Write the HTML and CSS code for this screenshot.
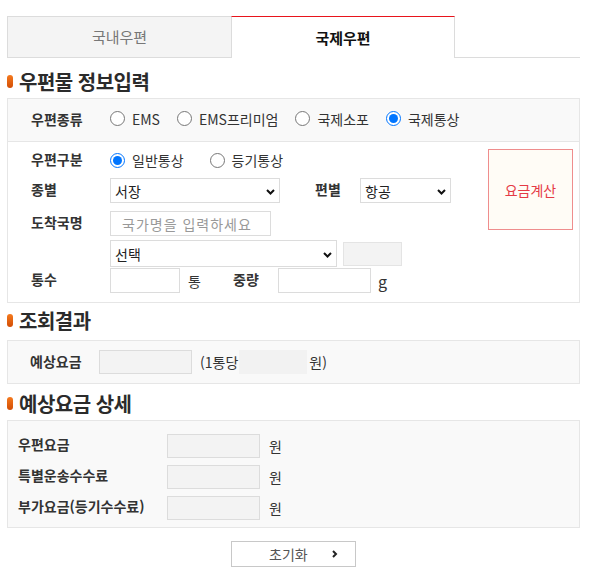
FILE: index.html
```html
<!DOCTYPE html>
<html lang="ko">
<head>
  <meta charset="UTF-8" />
  <title>국제우편 요금계산</title>
  <link rel="stylesheet" href="styles.css">
</head>
<body>
<div class="wrap">

  <div class="tabs">
    <div class="tab">국내우편</div>
    <div class="tab on">국제우편</div>
    <div class="tab-rest"></div>
  </div>

  <h3 class="title"><span class="dot"></span>우편물 정보입력</h3>

  <div class="box gray type-row">
    <span class="lbl">우편종류</span>
    <label class="opt"><input type="radio" name="kind">EMS</label>
    <label class="opt"><input type="radio" name="kind">EMS프리미엄</label>
    <label class="opt"><input type="radio" name="kind">국제소포</label>
    <label class="opt"><input type="radio" name="kind" checked>국제통상</label>
  </div>

  <div class="box info">
    <div class="form">
      <div class="row r1">
        <span class="lbl">우편구분</span>
        <label class="opt wide"><input type="radio" name="sub" checked>일반통상</label>
        <label class="opt"><input type="radio" name="sub">등기통상</label>
      </div>
      <div class="row r2">
        <span class="lbl">종별</span>
        <div class="sel w170">
          <select><option>서장</option></select>
          <svg class="arr" width="9" height="6" viewBox="0 0 9 6"><path d="M1 1l3.5 3.5L8 1" fill="none" stroke="#111" stroke-width="2"/></svg>
        </div>
        <span class="lbl mid">편별</span>
        <div class="sel w91">
          <select><option>항공</option></select>
          <svg class="arr" width="9" height="6" viewBox="0 0 9 6"><path d="M1 1l3.5 3.5L8 1" fill="none" stroke="#111" stroke-width="2"/></svg>
        </div>
      </div>
      <div class="row r3">
        <span class="lbl">도착국명</span>
        <input type="text" class="txt w161" placeholder="국가명을 입력하세요">
      </div>
      <div class="row r4">
        <span class="lbl"></span>
        <div class="sel w227 tall">
          <select><option>선택</option></select>
          <svg class="arr" width="9" height="6" viewBox="0 0 9 6"><path d="M1 1l3.5 3.5L8 1" fill="none" stroke="#111" stroke-width="2"/></svg>
        </div>
        <span class="code"></span>
      </div>
      <div class="row r5">
        <span class="lbl">통수</span>
        <input type="text" class="txt w70">
        <span class="unit">통</span>
        <span class="lbl mid">중량</span>
        <input type="text" class="txt w93">
        <span class="unit-g">g</span>
      </div>
    </div>
    <button class="calc">요금계산</button>
  </div>

  <h3 class="title t2"><span class="dot"></span>조회결과</h3>

  <div class="box gray result">
    <span class="lbl">예상요금</span>
    <input type="text" class="txt ro w93" readonly>
    <span class="per">(1통당</span>
    <span class="per-val"></span>
    <span>원)</span>
  </div>

  <h3 class="title t3"><span class="dot"></span>예상요금 상세</h3>

  <div class="box gray detail">
    <div class="drow">
      <span class="lbl">우편요금</span>
      <input type="text" class="txt ro w93" readonly>
      <span class="won">원</span>
    </div>
    <div class="drow">
      <span class="lbl">특별운송수수료</span>
      <input type="text" class="txt ro w93" readonly>
      <span class="won">원</span>
    </div>
    <div class="drow">
      <span class="lbl">부가요금(등기수수료)</span>
      <input type="text" class="txt ro w93" readonly>
      <span class="won">원</span>
    </div>
  </div>

  <div class="btns">
    <button class="reset">초기화
      <svg width="6" height="8" viewBox="0 0 6 8"><path d="M1 1l3 3-3 3" fill="none" stroke="#222" stroke-width="2"/></svg>
    </button>
  </div>

</div>
</body>
</html>
```

FILE: styles.css
```css
body {
  margin: 0;
  padding: 16px 0 0 7px;
  font-family: "Noto Sans CJK KR", "Noto Sans", sans-serif;
  font-size: 14px;
  color: #333;
  background: #fff;
}

.wrap {
  width: 573px;
}

/* tabs */
.tabs {
  display: flex;
  height: 42px;
}

.tab {
  width: 224px;
  box-sizing: border-box;
  display: flex;
  align-items: center;
  justify-content: center;
  padding-bottom: 1px;
  font-size: 15px;
  color: #777;
  background: #f4f4f4;
  border: 1px solid #dcdcdc;
  border-right: none;
}

.tab.on {
  background: #fff;
  color: #111;
  font-weight: bold;
  border-top: 1px solid #e8141c;
  border-left: 1px solid #dcdcdc;
  border-right: 1px solid #dcdcdc;
  border-bottom: none;
}

.tab-rest {
  flex: 1;
  border-bottom: 1px solid #dcdcdc;
}

/* section titles */
.title {
  display: flex;
  align-items: center;
  height: 24px;
  margin: 11px 0 5px;
  font-size: 20px;
  font-weight: bold;
  color: #2b2b2b;
  letter-spacing: -0.5px;
}

.title.t2 {
  margin: 5px 0 8px;
}

.title.t3 {
  margin: 7px 0 5px;
}

.dot {
  width: 6px;
  height: 13px;
  margin-right: 6px;
  border-radius: 3px;
  background: linear-gradient(#f57a1e, #d24d05);
}

/* boxes */
.box {
  box-sizing: border-box;
  border: 1px solid #e6e6e6;
}

.box.gray {
  background: #f9f9f9;
}

.lbl {
  font-weight: bold;
  color: #333;
  flex-shrink: 0;
}

.opt {
  display: flex;
  align-items: center;
  margin-right: 17px;
  color: #333;
  white-space: nowrap;
}

.opt input {
  width: 15px;
  height: 15px;
  margin: 0 7px 0 0;
}

.opt.wide {
  margin-right: 26px;
}

.type-row {
  display: flex;
  align-items: center;
  height: 43px;
  padding: 0 0 3px 23px;
  border-bottom: none;
}

.type-row .lbl {
  width: 79px;
}

/* info box */
.info {
  display: flex;
  padding: 7px 6px 9px 23px;
}

.form {
  flex: 1;
}

.row {
  display: flex;
  align-items: center;
}

.row .lbl {
  width: 79px;
  margin-top: -4px;
}

.row .lbl.mid {
  width: 45px;
}

.r1 { height: 20px; margin-top: 1px; }
.r2 { height: 25px; margin-top: 8px; }
.r3 { height: 25px; margin-top: 8px; }
.r4 { height: 27px; margin-top: 4px; }
.r5 { height: 25px; margin-top: 1px; }

.r1 .lbl {
  margin-top: -2px;
}

.sel {
  position: relative;
  height: 25px;
}

.sel.tall {
  height: 27px;
}

.sel select {
  appearance: none;
  width: 100%;
  height: 100%;
  box-sizing: border-box;
  border: 1px solid #dcdcdc;
  background: #fff;
  padding: 0 0 0 4px;
  font-family: inherit;
  font-size: 14px;
  color: #222;
  border-radius: 0;
}

.sel .arr {
  position: absolute;
  right: 5px;
  top: 50%;
  margin-top: -2px;
  pointer-events: none;
}

.w170 { width: 170px; margin-right: 35px; }
.w91 { width: 91px; }
.w161 { width: 161px; }
.w227 { width: 227px; }
.w70 { width: 70px; }
.w93 { width: 93px; }

.txt {
  box-sizing: border-box;
  height: 25px;
  border: 1px solid #dcdcdc;
  background: #fff;
  padding: 0 0 0 11px;
  font-family: inherit;
  font-size: 14px;
  border-radius: 0;
}

.txt::placeholder {
  color: #999;
  letter-spacing: 1px;
}

.txt.ro {
  height: 24px;
  background: #f3f3f3;
}

.code {
  width: 59px;
  height: 24px;
  margin-left: 6px;
  box-sizing: border-box;
  background: #f3f3f3;
  border: 1px solid #e4e4e4;
}

.unit {
  width: 53px;
  padding-left: 8px;
  box-sizing: border-box;
}

.unit-g {
  margin-left: 7px;
  font-size: 16px;
}

.calc {
  width: 85px;
  height: 81px;
  border: 1px solid #ef8d8d;
  background: #fffcf6;
  color: #e53a45;
  font-family: inherit;
  font-size: 14px;
  cursor: pointer;
  padding: 0;
}

/* result */
.result {
  display: flex;
  align-items: center;
  height: 44px;
  padding-left: 22px;
}

.result .lbl {
  width: 69px;
  margin-top: -3px;
}

.per {
  margin-left: 8px;
}

.per-val {
  width: 68px;
  height: 24px;
  margin: 0 2px 0 1px;
  background: #f2f2f2;
}

/* detail */
.detail {
  display: flex;
  flex-direction: column;
  gap: 6px;
  padding: 12px 0 7px 10px;
}

.drow {
  display: flex;
  align-items: center;
  height: 25px;
}

.drow .lbl {
  width: 149px;
  margin-top: -3px;
}

.won {
  margin-left: 9px;
}

/* bottom button */
.btns {
  display: flex;
  justify-content: center;
  margin-top: 13px;
}

.reset {
  display: flex;
  align-items: center;
  width: 125px;
  height: 26px;
  padding: 0 0 0 37px;
  border: 1px solid #c8c8c8;
  background: #fff;
  color: #555;
  font-family: inherit;
  font-size: 14px;
  cursor: pointer;
}

.reset svg {
  margin-left: 24px;
}
```
